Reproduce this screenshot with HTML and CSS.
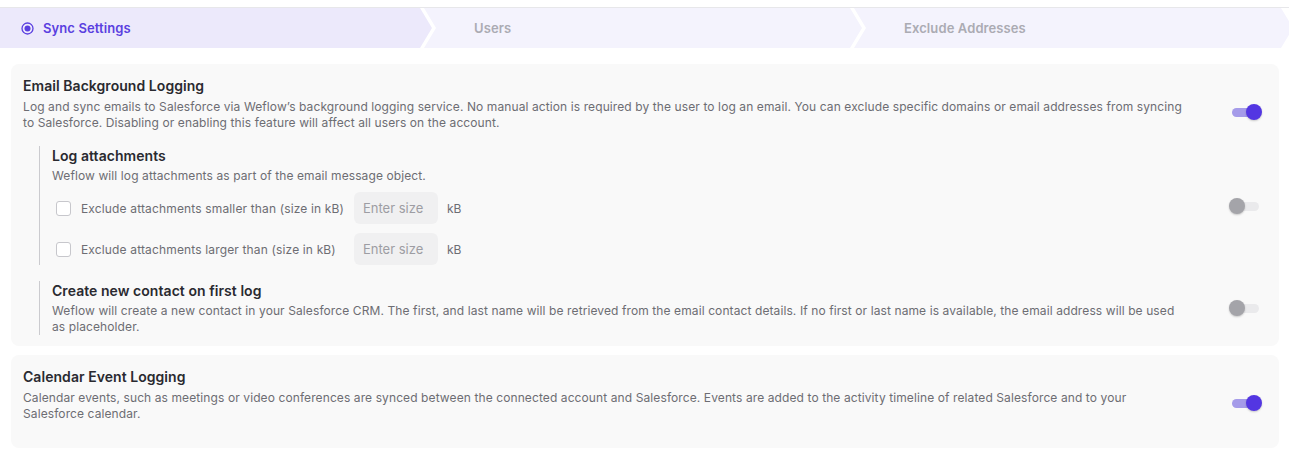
FILE: index.html
```html
<!DOCTYPE html>
<html lang="en">
<head>
  <meta charset="UTF-8">
  <meta name="viewport" content="width=device-width, initial-scale=1.0">
  <title>Sync Settings</title>
  <link rel="stylesheet" href="styles.css">
</head>
<body>

<div class="stepper">
  <div class="step step-first active">
    <svg class="step-icon" width="13" height="13" viewBox="0 0 13 13">
      <circle cx="6.5" cy="6.5" r="5.5" fill="none" stroke="#5a3fe0" stroke-width="1.3"/>
      <circle cx="6.5" cy="6.5" r="3" fill="#5a3fe0"/>
    </svg>
    <span>Sync Settings</span>
  </div>
  <div class="step step-mid">
    <span>Users</span>
  </div>
  <div class="step step-last">
    <span>Exclude Addresses</span>
  </div>
</div>

<div class="content">

  <div class="card">
    <div class="card-head">
      <div class="text">
        <div class="title">Email Background Logging</div>
        <div class="desc">Log and sync emails to Salesforce via Weflow’s background logging service. No manual action is required by the user to log an email. You can exclude specific domains or email addresses from syncing to Salesforce. Disabling or enabling this feature will affect all users on the account.</div>
      </div>
      <div class="switch on"></div>
    </div>

    <div class="sub">
      <div class="text">
        <div class="title">Log attachments</div>
        <div class="desc">Weflow will log attachments as part of the email message object.</div>
        <div class="size-rows">
          <div class="size-row">
            <span class="check"></span>
            <span class="label">Exclude attachments smaller than (size in kB)</span>
            <input class="size-input" type="text" placeholder="Enter size">
            <span class="unit">kB</span>
          </div>
          <div class="size-row">
            <span class="check"></span>
            <span class="label">Exclude attachments larger than (size in kB)</span>
            <input class="size-input" type="text" placeholder="Enter size">
            <span class="unit">kB</span>
          </div>
        </div>
      </div>
      <div class="switch off"></div>
    </div>

    <div class="sub">
      <div class="text">
        <div class="title">Create new contact on first log</div>
        <div class="desc">Weflow will create a new contact in your Salesforce CRM. The first, and last name will be retrieved from the email contact details. If no first or last name is available, the email address will be used as placeholder.</div>
      </div>
      <div class="switch off"></div>
    </div>
  </div>

  <div class="card">
    <div class="card-head">
      <div class="text">
        <div class="title">Calendar Event Logging</div>
        <div class="desc">Calendar events, such as meetings or video conferences are synced between the connected account and Salesforce. Events are added to the activity timeline of related Salesforce and to your Salesforce calendar.</div>
      </div>
      <div class="switch on"></div>
    </div>
  </div>

</div>

</body>
</html>
```

FILE: styles.css
```css
body {
  font-family: Inter, "Noto Sans", sans-serif;
  margin: 0;
  padding-top: 7px;
  background: #fff;
  color: #27272c;
}

.stepper {
  display: flex;
  border-top: 1px solid #e7e7ea;
  height: 40px;
  overflow: hidden;
}

.step {
  height: 40px;
  display: flex;
  align-items: center;
  flex-shrink: 0;
  font-size: 13px;
  font-weight: 600;
  letter-spacing: 0.1px;
  color: #ababb3;
  background: #f4f3fd;
  padding-left: 50px;
  box-sizing: border-box;
  clip-path: polygon(0 0, calc(100% - 12px) 0, 100% 50%, calc(100% - 12px) 100%, 0 100%, 12px 50%);
}

.step-first {
  width: 432px;
  padding-left: 21px;
  clip-path: polygon(0 0, calc(100% - 12px) 0, 100% 50%, calc(100% - 12px) 100%, 0 100%);
}

.step-mid {
  width: 438px;
  margin-left: -8px;
}

.step-last {
  width: 439px;
  margin-left: -8px;
}

.step.active {
  background: #ece9fb;
  color: #5a3fe0;
}

.step-icon {
  margin-right: 9px;
}

.content {
  padding: 16px 10px 0 11px;
  display: flex;
  flex-direction: column;
  gap: 9px;
}

.card {
  background: #f9f9f9;
  border-radius: 8px;
  padding: 12px 17px 11px 12px;
}

.card-head {
  display: flex;
  align-items: flex-start;
  gap: 45px;
  margin-bottom: 15px;
}

.card-head .switch {
  margin-top: 28px;
}

.text {
  flex: 1;
  min-width: 0;
}

.title {
  font-size: 14px;
  font-weight: 600;
  line-height: 20px;
  letter-spacing: 0.05px;
  color: #2a2a30;
}

.desc {
  font-size: 12px;
  line-height: 16px;
  letter-spacing: 0.1px;
  color: #6d6d73;
  margin-top: 3px;
}

.sub {
  display: flex;
  align-items: center;
  gap: 42px;
  margin-left: 16px;
  padding-left: 12px;
  border-left: 1px solid #cbcbcf;
  padding-right: 3px;
}

.sub + .sub {
  margin-top: 16px;
}

.sub .desc {
  margin-top: 2px;
}

.size-rows {
  display: flex;
  flex-direction: column;
  gap: 9px;
  margin-top: 8px;
}

.size-row {
  display: flex;
  align-items: center;
  padding-left: 4px;
}

.check {
  width: 13px;
  height: 13px;
  border: 1px solid #c7c7cc;
  border-radius: 3px;
  background: #fff;
  margin-right: 10px;
}

.label {
  width: 273px;
  font-size: 12px;
  letter-spacing: 0.15px;
  color: #6d6d73;
}

.size-input {
  width: 84px;
  height: 32px;
  box-sizing: border-box;
  border: none;
  border-radius: 6px;
  background: #f0f0f1;
  padding: 0 9px;
  font-family: inherit;
  font-size: 13px;
  color: #333;
  outline: none;
}

.size-input::placeholder {
  color: #9d9da3;
}

.unit {
  margin-left: 9px;
  font-size: 12px;
  color: #6d6d73;
}

.switch {
  position: relative;
  width: 30px;
  height: 16px;
  flex-shrink: 0;
}

.switch::before {
  content: "";
  position: absolute;
  top: 4px;
  width: 22px;
  height: 9px;
  border-radius: 5px;
}

.switch::after {
  content: "";
  position: absolute;
  top: 0;
  width: 16px;
  height: 16px;
  border-radius: 50%;
  box-shadow: 0 1px 2px rgba(0, 0, 0, 0.2);
}

.switch.on::before {
  left: 0;
  background: #a59be9;
}

.switch.on::after {
  right: 0;
  background: #5336e2;
}

.switch.off::before {
  right: 0;
  background: #eaeaec;
}

.switch.off::after {
  left: 0;
  background: #a4a4a9;
}
```
